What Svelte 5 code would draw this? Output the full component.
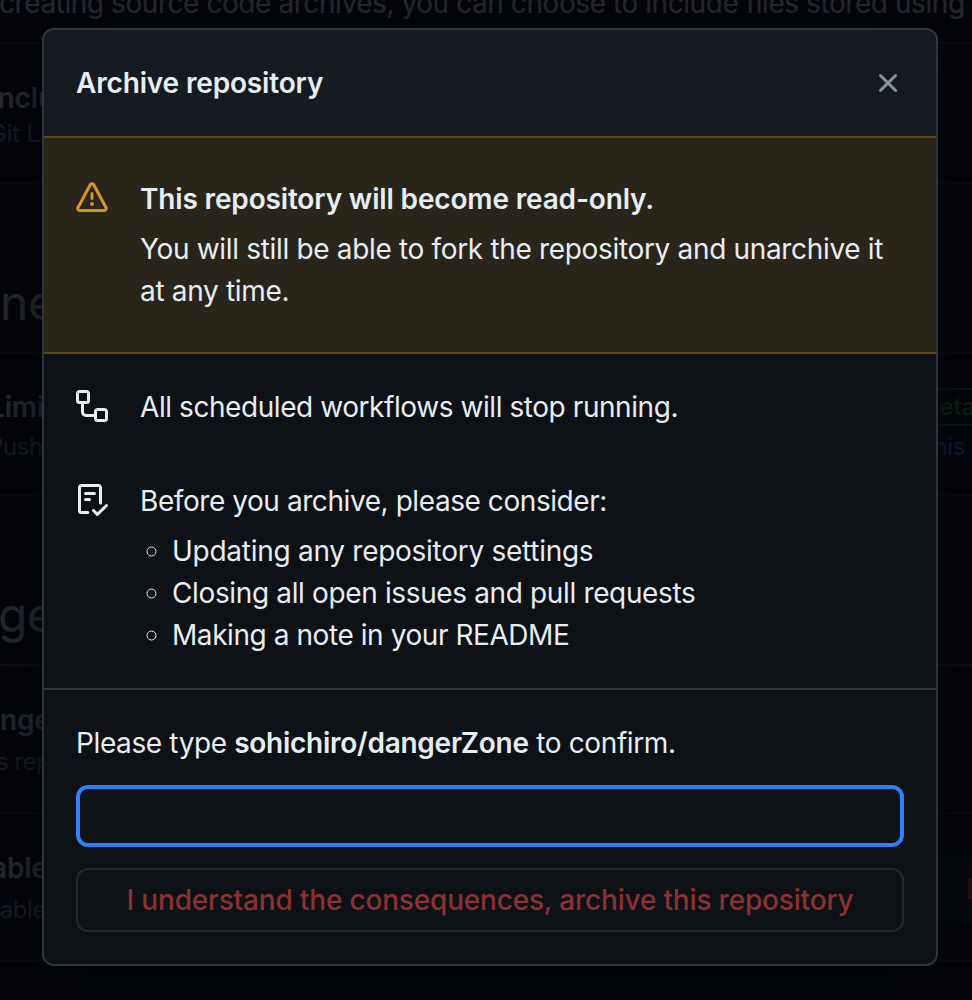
<script>
  const considerations = [
    'Updating any repository settings',
    'Closing all open issues and pull requests',
    'Making a note in your README'
  ];
</script>

<div class="viewport">
  <div class="page">
    <p class="intro">creating source code archives, you can choose to include files stored using</p>
    <div class="row first">
      <div>
        <div class="title shift-include">Include</div>
        <div class="sub sub-git">Git LFS objects</div>
      </div>
    </div>
    <h2 class="heading shift-ne">ne</h2>
    <div class="row">
      <div class="grow">
        <div class="title shift-limit">Limit <span class="beta">Beta</span></div>
        <div class="sub gap4 sub-split"><span>Push</span><a href="#this">this</a></div>
      </div>
    </div>
    <h2 class="heading danger shift-ge">ge</h2>
    <div class="row tall">
      <div>
        <div class="title shift-nge">nge</div>
        <div class="sub gap6 shift-rep">s rep</div>
      </div>
    </div>
    <div class="row tall split">
      <div>
        <div class="title shift-able">able</div>
        <div class="sub gap6 shift-nable">nable</div>
      </div>
      <button class="side-btn">Disable</button>
    </div>
  </div>

  <div class="backdrop"></div>

  <div class="dialog" role="dialog" aria-label="Archive repository">
    <header class="head">
      <h1>Archive repository</h1>
      <svg class="close" viewBox="0 0 16 16" width="32" height="32" fill="currentColor" aria-hidden="true"><path d="M3.72 3.72a.75.75 0 0 1 1.06 0L8 6.94l3.22-3.22a.749.749 0 0 1 1.275.326.749.749 0 0 1-.215.734L9.06 8l3.22 3.22a.749.749 0 0 1-.326 1.275.749.749 0 0 1-.734-.215L8 9.06l-3.22 3.22a.751.751 0 0 1-1.042-.018.751.751 0 0 1-.018-1.042L6.94 8 3.72 4.78a.75.75 0 0 1 0-1.06Z"/></svg>
    </header>

    <section class="warn">
      <svg class="icon amber" viewBox="0 0 16 16" width="32" height="32" fill="currentColor" aria-hidden="true"><path d="M6.457 1.047c.659-1.234 2.427-1.234 3.086 0l6.082 11.378A1.75 1.75 0 0 1 14.082 15H1.918a1.75 1.75 0 0 1-1.543-2.575Zm1.763.707a.25.25 0 0 0-.44 0L1.698 13.132a.25.25 0 0 0 .22.368h12.164a.25.25 0 0 0 .22-.368Zm.53 3.996v2.5a.75.75 0 0 1-1.5 0v-2.5a.75.75 0 0 1 1.5 0ZM9 11a1 1 0 1 1-2 0 1 1 0 0 1 2 0Z"/></svg>
      <div>
        <strong class="warn-title">This repository will become read-only.</strong>
        <p class="warn-text">You will still be able to fork the repository and unarchive it at any time.</p>
      </div>
    </section>

    <section class="info">
      <div class="item">
        <svg class="icon" viewBox="0 0 16 16" width="32" height="32" fill="currentColor" aria-hidden="true"><path d="M0 1.75C0 .784.784 0 1.75 0h3.5C6.216 0 7 .784 7 1.75v3.5A1.75 1.75 0 0 1 5.25 7H4v4a1 1 0 0 0 1 1h4v-1.25C9 9.784 9.784 9 10.75 9h3.5c.966 0 1.75.784 1.75 1.75v3.5A1.75 1.75 0 0 1 14.25 16h-3.5A1.75 1.75 0 0 1 9 14.25v-.75H5A2.5 2.5 0 0 1 2.5 11V7h-.75A1.75 1.75 0 0 1 0 5.25Zm1.75-.25a.25.25 0 0 0-.25.25v3.5c0 .138.112.25.25.25h3.5a.25.25 0 0 0 .25-.25v-3.5a.25.25 0 0 0-.25-.25Zm9 9a.25.25 0 0 0-.25.25v3.5c0 .138.112.25.25.25h3.5a.25.25 0 0 0 .25-.25v-3.5a.25.25 0 0 0-.25-.25Z"/></svg>
        <p>All scheduled workflows will stop running.</p>
      </div>
      <div class="item">
        <svg class="icon" viewBox="0 0 16 16" width="32" height="32" fill="currentColor" aria-hidden="true"><path d="M2.5 1.75v11.5c0 .138.112.25.25.25h3.17a.75.75 0 0 1 0 1.5H2.75A1.75 1.75 0 0 1 1 13.25V1.75C1 .784 1.784 0 2.75 0h8.5C12.216 0 13 .784 13 1.75v7.736a.75.75 0 0 1-1.5 0V1.75a.25.25 0 0 0-.25-.25h-8.5a.25.25 0 0 0-.25.25Zm13.274 9.537v-.001l-4.557 4.45a.75.75 0 0 1-1.055-.008l-1.943-1.95a.75.75 0 0 1 1.062-1.058l1.419 1.425 4.026-3.932a.75.75 0 1 1 1.048 1.074ZM4.75 4h4.5a.75.75 0 0 1 0 1.5h-4.5a.75.75 0 0 1 0-1.5ZM4 7.75A.75.75 0 0 1 4.75 7h2a.75.75 0 0 1 0 1.5h-2A.75.75 0 0 1 4 7.75Z"/></svg>
        <div>
          <p>Before you archive, please consider:</p>
          <ul>
            {#each considerations as text}
              <li>{text}</li>
            {/each}
          </ul>
        </div>
      </div>
    </section>

    <form class="confirm" onsubmit={(e) => e.preventDefault()}>
      <label for="verify">Please type <strong>sohichiro/dangerZone</strong> to confirm.</label>
      <input id="verify" type="text" autocomplete="off" />
      <button type="submit" disabled>I understand the consequences, archive this repository</button>
    </form>
  </div>
</div>

<style>
  :global(body) {
    margin: 0;
    background: #0d1117;
    font-family: Inter, "Liberation Sans", sans-serif;
    color: #e6edf3;
  }

  .viewport {
    position: relative;
    height: 1000px;
    overflow: hidden;
    font-size: 28px;
    line-height: 42px;
    letter-spacing: -0.43px;
  }

  .page {
    margin-top: -18px;
    width: 1012px;
    margin-left: -12px;
  }

  .intro {
    margin: 0;
    padding: 0 0 18px 11px;
    white-space: nowrap;
    border-bottom: 2px solid #30363d;
    color: #e6edf3;
  }

  .row {
    padding: 35px 0 29px;
    border-bottom: 2px solid #30363d;
  }

  .row.first { padding: 36px 0 30px; }
  .row.tall { padding: 36px 0 32px; }
  .split { display: flex; justify-content: space-between; align-items: center; }
  .grow { flex: 1; }

  .title {
    font-weight: 600;
    line-height: 36px;
    white-space: nowrap;
    letter-spacing: -0.16px;
  }

  .sub {
    font-size: 24px;
    line-height: 36px;
    color: #8b949e;
    white-space: nowrap;
  }

  .gap4 { margin-top: 4px; }
  .gap6 { margin-top: 6px; }

  .sub-split {
    display: flex;
    justify-content: space-between;
    padding-right: 35px;
  }

  .sub-split a {
    color: #58a6ff;
    text-decoration: none;
  }

  .heading {
    margin: 0;
    padding: 89px 0 19px;
    font-size: 48px;
    line-height: 60px;
    font-weight: 400;
    border-bottom: 2px solid #30363d;
  }

  .heading.danger { border-bottom-color: #f8514980; }

  .shift-include { margin-left: 2px; }
  .sub-git { margin-left: 1px; letter-spacing: -0.2px; }
  .shift-ne { margin-left: 12px; }
  .shift-limit {
    display: flex;
    justify-content: space-between;
    align-items: center;
    height: 36px;
    margin-left: 1px;
    padding-right: 9px;
  }
  .shift-ge { margin-left: 10px; }
  .shift-nge { margin-left: 12px; }
  .shift-rep { margin-left: 8px; }
  .shift-able { margin-left: 3px; }
  .shift-nable { margin-left: -2px; }

  .beta {
    font-size: 24px;
    font-weight: 500;
    line-height: 34px;
    color: #3fb950;
    border: 2px solid #238636;
    border-radius: 24px;
    padding: 0 14px;
  }

  .side-btn {
    width: 74px;
    height: 64px;
    padding: 0 0 0 38px;
    text-align: left;
    overflow: hidden;
    background: #21262d;
    color: #f85149;
    font: 500 28px Inter, sans-serif;
    border: 2px solid #30363d;
    border-radius: 12px 0 0 12px;
    border-right: 0;
  }

  .backdrop {
    position: absolute;
    inset: 0;
    background: rgba(1, 4, 9, 0.84);
  }

  .dialog {
    position: absolute;
    left: 42px;
    top: 28px;
    width: 896px;
    box-sizing: border-box;
    background: #0e1116;
    border: 2px solid #30363d;
    border-radius: 12px;
    overflow: hidden;
    box-shadow: 0 16px 64px rgba(1, 4, 9, 0.7);
  }

  .head {
    display: flex;
    align-items: center;
    justify-content: space-between;
    height: 106px;
    padding: 0 32px;
    background: #161b22;
  }

  h1 {
    margin: 0;
    font-size: 28px;
    font-weight: 600;
    line-height: 42px;
    letter-spacing: -0.16px;
    color: #e6edf3;
  }

  .close { color: #8b949e; }

  .warn {
    display: flex;
    gap: 32px;
    padding: 40px 32px 40px;
    background: #2a251b;
    border-top: 2px solid #5f4617;
    border-bottom: 2px solid #5f4617;
  }

  strong {
    font-weight: 600;
    letter-spacing: -0.16px;
  }

  .warn-title {
    display: block;
    margin-bottom: 8px;
  }

  .warn-text { letter-spacing: -0.33px; }

  p { margin: 0; }

  .icon {
    flex: none;
    margin-top: 4px;
  }

  .amber { color: #d29922; }

  .info {
    display: flex;
    flex-direction: column;
    gap: 52px;
    padding: 32px;
    border-bottom: 2px solid #30363d;
  }

  .item {
    display: flex;
    gap: 32px;
  }

  ul {
    margin: 8px 0 0;
    padding: 0 0 0 32px;
    list-style: circle;
  }

  li:nth-child(1) { letter-spacing: -0.27px; }
  li:nth-child(2) { letter-spacing: -0.36px; }

  .confirm {
    display: flex;
    flex-direction: column;
    padding: 32px;
  }

  label {
    display: block;
    letter-spacing: -0.38px;
  }

  label strong { letter-spacing: -0.26px; }

  input {
    box-sizing: border-box;
    height: 62px;
    margin-top: 21px;
    width: 100%;
    background: transparent;
    border: 4px solid #2f81f7;
    border-radius: 12px;
    outline: none;
    color: #e6edf3;
    font: inherit;
  }

  .confirm button {
    height: 64px;
    margin-top: 21px;
    background: transparent;
    border: 2px solid #262a30;
    border-radius: 12px;
    color: #8a3231;
    font: 500 28px Inter, sans-serif;
    letter-spacing: -0.18px;
  }
</style>
